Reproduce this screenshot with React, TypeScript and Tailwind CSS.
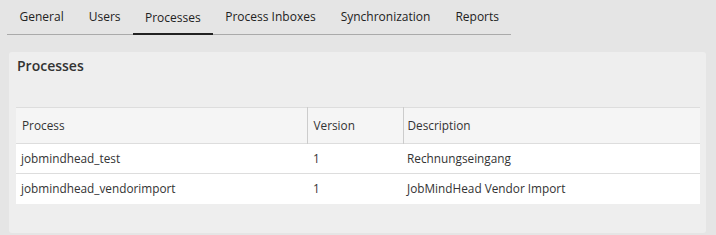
import React from "react";

const tabs = ["General", "Users", "Processes", "Process Inboxes", "Synchronization", "Reports"];
const rows = [
  { p: "jobmindhead_test", v: "1", d: "Rechnungseingang" },
  { p: "jobmindhead_vendorimport", v: "1", d: "JobMindHead Vendor Import" },
];

export default function App() {
  return (
    <div className="h-[235px] w-full bg-[#e5e5e5] text-[#333] overflow-hidden" style={{ fontFamily: '"Open Sans", sans-serif' }}>
      <div className="ml-[7px] w-[504px] h-[35px] flex items-stretch border-b border-[#aaaaaa] text-[#222]">
        {tabs.map((t) => (
          <div
            key={t}
            className={
              t === "Processes"
                ? "px-[12px] flex items-center whitespace-nowrap text-[12px] border-b-[2px] border-[#222] -mb-px pt-[2px]"
                : "px-[12.5px] flex items-center whitespace-nowrap text-[12px]"
            }
          >
            {t}
          </div>
        ))}
      </div>
      <div className="mt-[17px] ml-[9px] w-[697px] h-[181px] rounded-[3px] bg-[#eeeeee] pt-[2px] pl-[7px] pr-[6px]">
        <div className="pl-[1px] h-[22px] flex items-center text-[14px] font-semibold text-[#333]">Processes</div>
        <table className="mt-[31px] w-[684px] border-collapse text-[11.8px] table-fixed">
          <colgroup>
            <col className="w-[291px]" />
            <col className="w-[96px]" />
            <col />
          </colgroup>
          <thead>
            <tr className="bg-[#f5f5f5] h-[36px] border-t border-b border-[#dddddd]">
              <th className="text-left font-normal px-[6px]">Process</th>
              <th className="text-left font-normal px-[6px] border-l border-[#cccccc]">Version</th>
              <th className="text-left font-normal px-[4px] border-l border-[#cccccc]">Description</th>
            </tr>
          </thead>
          <tbody>
            {rows.map((r, i) => (
              <tr key={r.p} className={i === 0 ? "bg-white h-[30px] border-b border-[#dddddd]" : "bg-white h-[30px]"}>
                <td className="px-[5px]">{r.p}</td>
                <td className="px-[6px]">{r.v}</td>
                <td className="px-[4px]">{r.d}</td>
              </tr>
            ))}
          </tbody>
        </table>
      </div>
    </div>
  );
}
